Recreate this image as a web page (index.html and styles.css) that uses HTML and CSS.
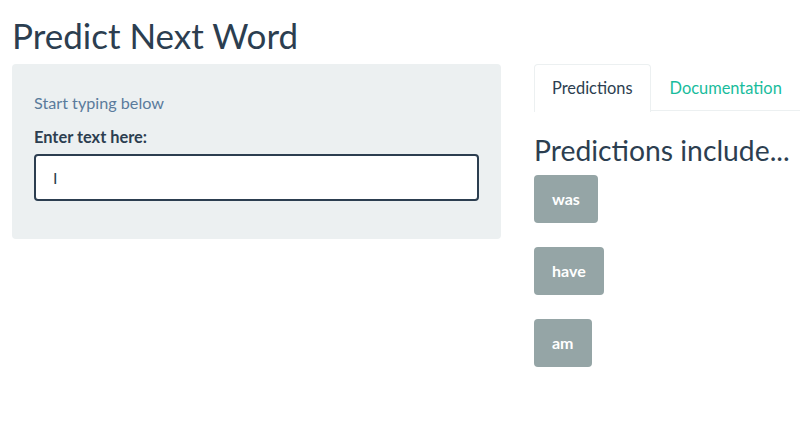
FILE: index.html
```html
<!DOCTYPE html>
<html>
<head>
<meta charset="utf-8">
<link rel="stylesheet" href="styles.css">
</head>
<body>
<div class="page">
  <h1 class="title">Predict Next Word</h1>
  <div class="layout">
    <div class="sidebar">
      <div class="well">
        <p class="hint">Start typing below</p>
        <label class="label" for="txt">Enter text here:</label>
        <div class="input">I</div>
      </div>
    </div>
    <div class="main">
      <ul class="tabs">
        <li class="tab active">Predictions</li>
        <li class="tab">Documentation</li>
      </ul>
      <h3 class="subtitle">Predictions include...</h3>
      <div class="buttons">
        <span class="btn">was</span>
        <span class="btn">have</span>
        <span class="btn">am</span>
      </div>
    </div>
  </div>
</div>
</body>
</html>
```
FILE: styles.css
```css
html, body {
  margin: 0;
  padding: 0;
  background: #ffffff;
  overflow: hidden;
}
body {
  font-family: Lato, "Liberation Sans", sans-serif;
  color: #2c3e50;
  font-size: 16px;
  width: 800px;
  height: 432px;
}
.page {
  padding: 0 12px;
  width: 1200px;
}
.title {
  margin: 0;
  padding-top: 13px;
  height: 64px;
  box-sizing: border-box;
  font-size: 35px;
  font-weight: 400;
  line-height: 44px;
  color: #2c3e50;
}
.layout {
  display: flex;
  gap: 33px;
}
.sidebar {
  width: 489px;
  flex: none;
}
.well {
  background: #ecf0f1;
  border-radius: 4px;
  padding: 29px 22px 38px 22px;
  height: 175px;
  box-sizing: border-box;
}
.hint {
  margin: 0;
  color: #5a7b9c;
  font-size: 16.2px;
  line-height: 20px;
}
.label {
  display: block;
  margin-top: 14px;
  font-weight: 700;
  font-size: 16.4px;
  line-height: 20px;
  color: #2c3e50;
}
.input {
  margin-top: 7px;
  height: 47px;
  box-sizing: border-box;
  border: 2px solid #2c3e50;
  border-radius: 4px;
  background: #fff;
  padding: 12px 17px;
  font-size: 16px;
  line-height: 20px;
  color: #2c3e50;
}
.main {
  flex: 1;
}
.tabs {
  list-style: none;
  margin: 0;
  padding: 0;
  display: flex;
  gap: 2px;
  border-bottom: 1px solid #ecf0f1;
  height: 46px;
  box-sizing: content-box;
}
.tab {
  padding: 0 16px;
  line-height: 46px;
  font-size: 16.4px;
  color: #18bc9c;
  border: 1px solid transparent;
  border-bottom: none;
  border-radius: 4px 4px 0 0;
  margin-bottom: -1px;
  height: 46px;
}
.tab.active {
  padding: 0 17px;
  color: #2c3e50;
  background: #fff;
  border-color: #ecf0f1;
  height: 47px;
}
.subtitle {
  margin: 0;
  padding-top: 22px;
  font-size: 28.3px;
  font-weight: 400;
  line-height: 34px;
  color: #2c3e50;
}
.buttons {
  display: flex;
  flex-direction: column;
  align-items: flex-start;
  gap: 24px;
  margin-top: 8px;
}
.btn {
  display: inline-block;
  background: #95a5a6;
  color: #fff;
  border-radius: 4px;
  padding: 0 18px;
  height: 48px;
  line-height: 48px;
  font-size: 16px;
  font-weight: 700;
}
```
